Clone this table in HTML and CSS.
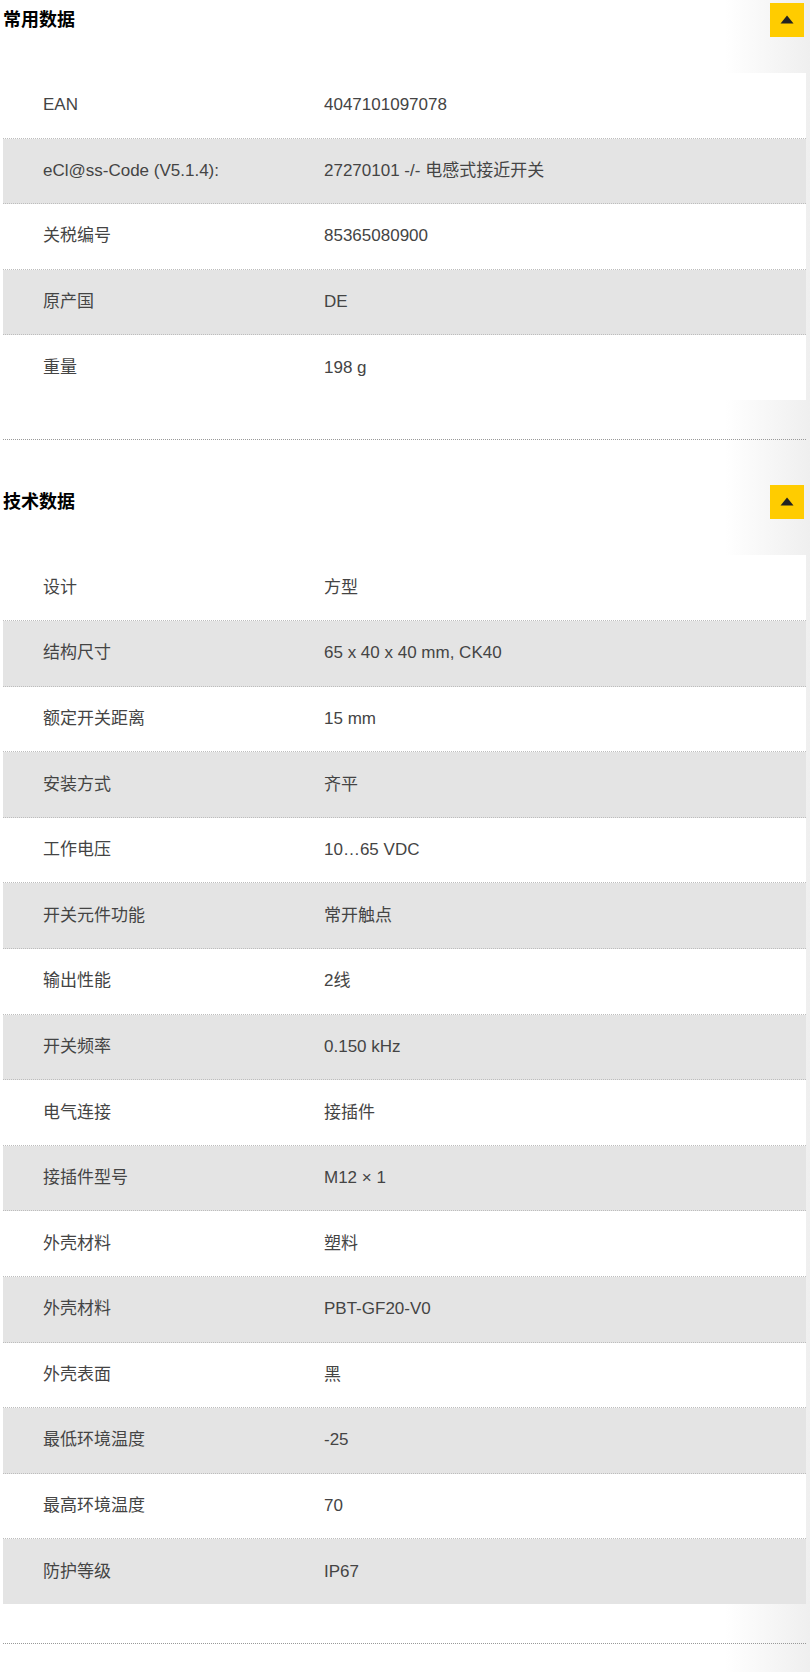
FILE: index.html
```html
<!DOCTYPE html>
<html lang="zh-CN">
<head>
<meta charset="utf-8">
<title>数据</title>
<link rel="stylesheet" href="styles.css">
</head>
<body>
<div class="page">
  <section class="block">
    <div class="block-head">
      <h2 class="block-title">常用数据</h2>
      <button class="toggle" type="button" aria-label="收起"><svg width="14" height="9" viewBox="0 0 14 9"><polygon points="7,0.5 13.5,8.5 0.5,8.5" fill="#222"/></svg></button>
    </div>
    <div class="table">
      <div class="row"><span class="label">EAN</span><span class="value">4047101097078</span></div>
      <div class="row"><span class="label">eCl@ss-Code (V5.1.4):</span><span class="value">27270101 -/- 电感式接近开关</span></div>
      <div class="row"><span class="label">关税编号</span><span class="value">85365080900</span></div>
      <div class="row"><span class="label">原产国</span><span class="value">DE</span></div>
      <div class="row"><span class="label">重量</span><span class="value">198 g</span></div>
    </div>
  </section>
  <hr class="sep">
  <section class="block">
    <div class="block-head">
      <h2 class="block-title">技术数据</h2>
      <button class="toggle" type="button" aria-label="收起"><svg width="14" height="9" viewBox="0 0 14 9"><polygon points="7,0.5 13.5,8.5 0.5,8.5" fill="#222"/></svg></button>
    </div>
    <div class="table">
      <div class="row"><span class="label">设计</span><span class="value">方型</span></div>
      <div class="row"><span class="label">结构尺寸</span><span class="value">65 x 40 x 40 mm, CK40</span></div>
      <div class="row"><span class="label">额定开关距离</span><span class="value">15 mm</span></div>
      <div class="row"><span class="label">安装方式</span><span class="value">齐平</span></div>
      <div class="row"><span class="label">工作电压</span><span class="value">10…65 VDC</span></div>
      <div class="row"><span class="label">开关元件功能</span><span class="value">常开触点</span></div>
      <div class="row"><span class="label">输出性能</span><span class="value">2线</span></div>
      <div class="row"><span class="label">开关频率</span><span class="value">0.150 kHz</span></div>
      <div class="row"><span class="label">电气连接</span><span class="value">接插件</span></div>
      <div class="row"><span class="label">接插件型号</span><span class="value">M12 × 1</span></div>
      <div class="row"><span class="label">外壳材料</span><span class="value">塑料</span></div>
      <div class="row"><span class="label">外壳材料</span><span class="value">PBT-GF20-V0</span></div>
      <div class="row"><span class="label">外壳表面</span><span class="value">黑</span></div>
      <div class="row"><span class="label">最低环境温度</span><span class="value">-25</span></div>
      <div class="row"><span class="label">最高环境温度</span><span class="value">70</span></div>
      <div class="row"><span class="label">防护等级</span><span class="value">IP67</span></div>
    </div>
  </section>
  <hr class="sep">
</div>
</body>
</html>
```
FILE: styles.css
```css
html {
  min-height: 100%;
  background: linear-gradient(to right, #ffffff 0, #ffffff 725px, #efefef 810px);
}
body {
  margin: 0;
  font-family: "Liberation Sans", Arial, "Noto Sans CJK SC", sans-serif;
  color: #444;
}
.page {
  padding: 3px 4px 30px 3px;
}
.block-head {
  display: flex;
  align-items: center;
  justify-content: space-between;
  height: 34px;
  padding-right: 2px;
}
.block-title {
  margin: 0;
  font-size: 18px;
  font-weight: bold;
  color: #000;
  line-height: 20px;
}
.toggle {
  width: 34px;
  height: 34px;
  border: 0;
  padding: 0;
  background: #ffcc00;
  display: flex;
  align-items: center;
  justify-content: center;
  cursor: pointer;
}
.toggle svg {
  display: block;
  margin-top: -1px;
}
.table {
  margin-top: 36px;
  background: #fff;
}
.row {
  display: flex;
  align-items: center;
  padding: 22.3px 0 22.3px 40px;
  line-height: 20px;
  font-size: 17px;
  border-bottom: 1px dotted #bdbdbd;
}
.row:nth-child(even) {
  background: #e4e4e4;
}
.row:last-child {
  border-bottom: 0;
  padding-bottom: 22.8px;
}
.label {
  width: 281px;
  flex: none;
}
.value {
  flex: 1;
}
.sep {
  margin: 39px 0 45px;
  height: 0;
  border: 0;
  border-top: 1px dotted #999;
}
```
